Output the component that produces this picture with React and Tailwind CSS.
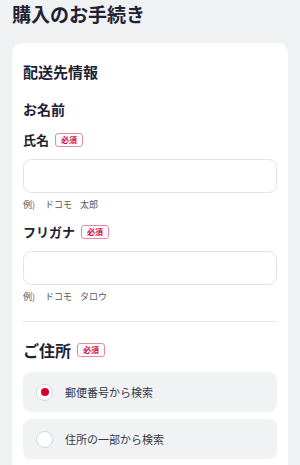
import React from "react";

function Badge() {
  return (
    <span className="ml-[6px] inline-flex h-[14px] w-[28px] items-center justify-center rounded-[3px] border border-[#e88aa2] text-[8px] font-bold leading-none text-[#d4083d]">
      必須
    </span>
  );
}

function Field({ label, parts }) {
  return (
    <div>
      <div className="flex h-[20px] items-center">
        <span className="text-[13px] font-bold leading-[20px] text-[#1e2233]">{label}</span>
        <Badge />
      </div>
      <div className="mt-[9px] h-[34px] rounded-lg border border-[#e3e4e8] bg-white"></div>
      <div className="mt-[5px] flex text-[9px] leading-[14px] text-[#555a66]">
        <span>例)</span>
        <span className="ml-[10px]">{parts[0]}</span>
        <span className="ml-[8px]">{parts[1]}</span>
      </div>
    </div>
  );
}

function Radio({ checked, label }) {
  return (
    <div className="flex h-[40px] items-center rounded-lg bg-[#f1f2f4] pl-[13px]">
      <span className="flex h-[17px] w-[17px] items-center justify-center rounded-full border-[1.5px] border-[#d3d5d9] bg-white">
        {checked && <span className="h-[8px] w-[8px] rounded-full bg-[#d6002f]"></span>}
      </span>
      <span className="ml-[12px] text-[11px] leading-[16px] text-[#343946]">{label}</span>
    </div>
  );
}

export default function App() {
  return (
    <div
      className="min-h-[465px] bg-[#f0f1f3]"
      style={{ fontFamily: '"Noto Sans CJK JP", "Noto Sans", sans-serif' }}
    >
      <h1 className="px-3 text-[19px] font-bold leading-[27px] text-[#1e2233]">購入のお手続き</h1>
      <div className="mx-3 mt-[16px] rounded-[10px] bg-white px-[11px] pt-[19px] pb-4">
        <div className="text-[15px] font-bold leading-[20px] text-[#1e2233]">配送先情報</div>
        <div className="mt-[17px] text-[14px] font-bold leading-[20px] text-[#1e2233]">お名前</div>
        <div className="mt-[11px]">
          <Field label="氏名" parts={["ドコモ", "太郎"]} />
        </div>
        <div className="mt-[10px]">
          <Field label="フリガナ" parts={["ドコモ", "タロウ"]} />
        </div>
        <div className="mt-[17px] h-px bg-[#e5e6e9]"></div>
        <div className="mt-[17px] flex h-[22px] items-center">
          <span className="text-[16px] font-bold leading-[22px] text-[#1e2233]">ご住所</span>
          <Badge />
        </div>
        <div className="mt-[11px] flex flex-col gap-[7px]">
          <Radio checked label="郵便番号から検索" />
          <Radio label="住所の一部から検索" />
        </div>
      </div>
    </div>
  );
}
